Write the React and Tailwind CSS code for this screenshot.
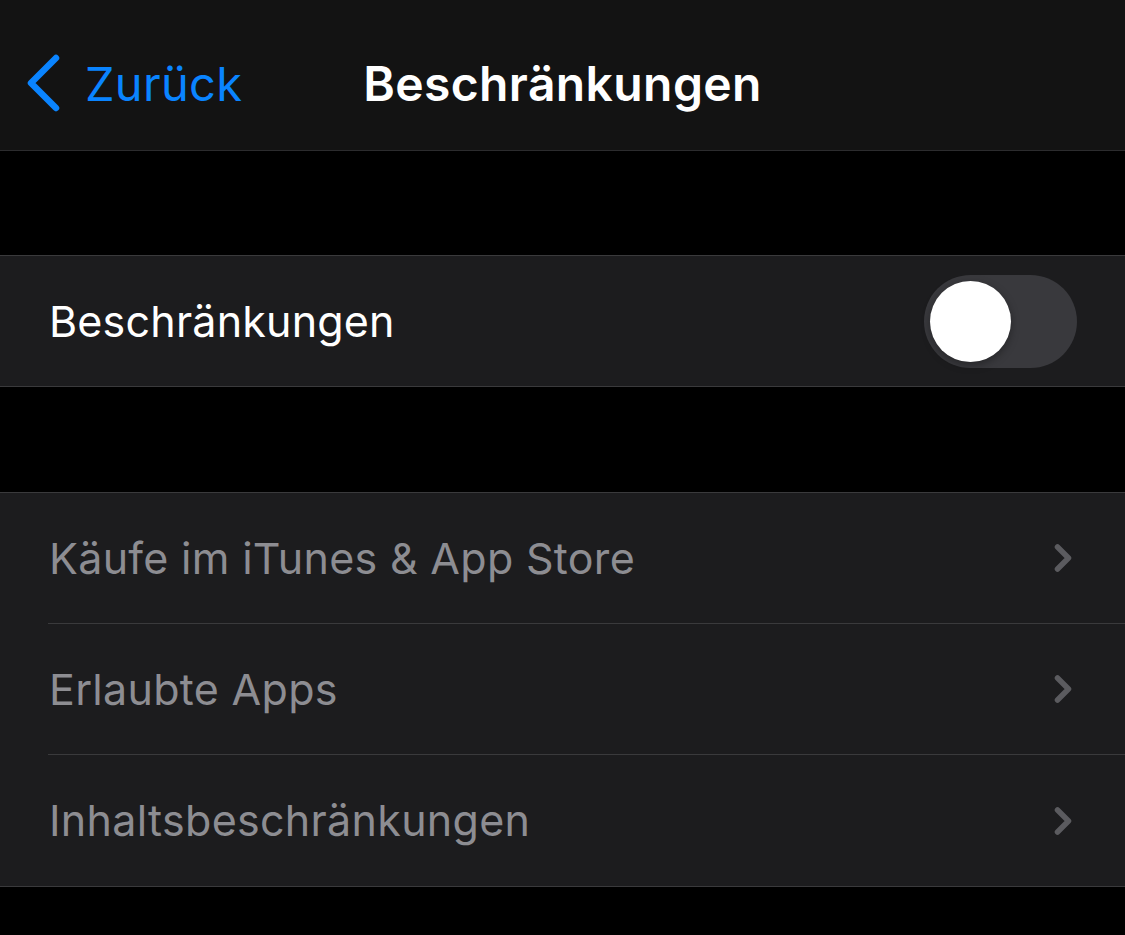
import { ChevronRight } from 'lucide-react';

const items = ['Käufe im iTunes & App Store', 'Erlaubte Apps', 'Inhaltsbeschränkungen'];

function BackChevron() {
  return (
    <svg width="36" height="58" viewBox="0 0 36 58" fill="none">
      <path d="M31 4 L6 29 L31 54" stroke="#0a84ff" strokeWidth="6.5" strokeLinecap="round" strokeLinejoin="round" />
    </svg>
  );
}

function Toggle() {
  return (
    <div className="flex h-[93px] w-[153px] items-center rounded-full bg-[#39393d] pl-[6px]">
      <div className="h-[81px] w-[81px] rounded-full bg-white shadow-[0_3px_8px_rgba(0,0,0,0.35)]" />
    </div>
  );
}

export default function App() {
  return (
    <div className="min-h-[935px] w-full bg-black font-['Inter',sans-serif] antialiased">
      <header className="relative flex h-[151px] items-center border-b border-[#2c2c2e] bg-[#131313]">
        <div className="flex items-center gap-[24px] pl-[25px] pt-[16px]">
          <BackChevron />
          <span className="text-[47px] leading-none tracking-[0.3px] text-[#0a84ff]">Zurück</span>
        </div>
        <h1 className="absolute left-1/2 top-1/2 -translate-x-1/2 -translate-y-1/2 pt-[18px] text-[48px] font-semibold leading-none tracking-[0.4px] text-white">
          Beschränkungen
        </h1>
      </header>

      <div className="h-[104px]" />

      <section className="border-y border-[#3a3a3c] bg-[#1c1c1e]">
        <div className="flex h-[130px] items-center justify-between pl-[49px] pr-[48px]">
          <span className="text-[43px] leading-none tracking-[0.2px] text-white">Beschränkungen</span>
          <Toggle />
        </div>
      </section>

      <div className="h-[105px]" />

      <section className="border-y border-[#3a3a3c] bg-[#1c1c1e]">
        {items.map((label, i) => (
          <div key={label} className="pl-[48px]">
            <div
              className={
                i < items.length - 1
                  ? 'flex h-[131px] items-center justify-between border-b border-[#3a3a3c] pr-[40px]'
                  : 'flex h-[131px] items-center justify-between pr-[40px]'
              }
            >
              <span className="pl-px text-[43px] leading-none tracking-[0.3px] text-[#8d8d92]">{label}</span>
              <ChevronRight className="h-[44px] w-[44px] text-[#5b5b5f]" strokeWidth={3} />
            </div>
          </div>
        ))}
      </section>
    </div>
  );
}
